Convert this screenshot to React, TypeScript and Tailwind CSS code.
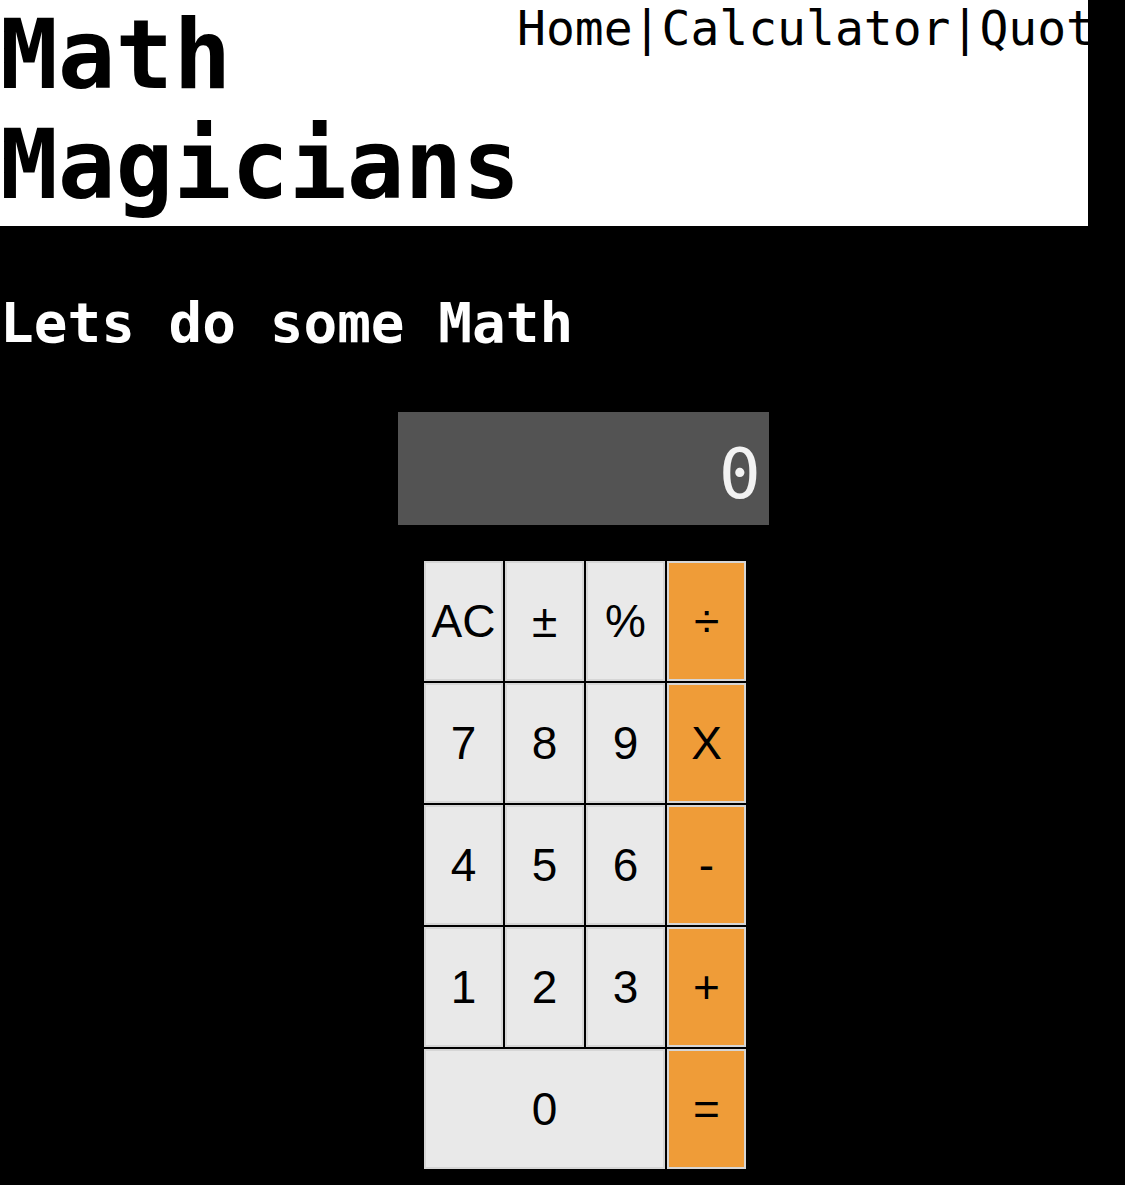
import { useState } from 'react'

const keys: { label: string; orange?: boolean; wide?: boolean }[] = [
  { label: 'AC' },
  { label: '±' },
  { label: '%' },
  { label: '÷', orange: true },
  { label: '7' },
  { label: '8' },
  { label: '9' },
  { label: 'X', orange: true },
  { label: '4' },
  { label: '5' },
  { label: '6' },
  { label: '-', orange: true },
  { label: '1' },
  { label: '2' },
  { label: '3' },
  { label: '+', orange: true },
  { label: '0', wide: true },
  { label: '=', orange: true },
]

export default function App() {
  const [display] = useState('0')

  return (
    <div className="min-h-[1185px] bg-black" style={{ fontFamily: '"DejaVu Sans Mono", monospace' }}>
      {/* Header */}
      <header className="flex h-[226px] w-[1088px] overflow-hidden bg-white text-black">
        <h1 className="w-[517px] shrink-0 text-[96px] font-bold leading-[110px]">Math Magicians</h1>
        <nav className="flex whitespace-nowrap text-[48px] leading-[56px]">
          <a href="#">Home</a>
          <span>|</span>
          <a href="#">Calculator</a>
          <span>|</span>
          <a href="#">Quote</a>
        </nav>
      </header>

      <h2 className="mt-[64px] text-[56px] font-bold leading-[65px] text-white">Lets do some Math</h2>

      {/* Calculator */}
      <div className="ml-[398px] mt-[57px] w-[371px]">
        <div className="h-[113px] bg-[#535353] pr-[8px] pt-[22px] text-right text-[70px] leading-[81px] text-[#f2f2f2]">
          {display}
        </div>

        <div
          className="ml-[26px] mt-[36px] grid w-[322px] grid-cols-4 gap-[2px] bg-black"
          style={{ fontFamily: '"Liberation Sans", Arial, sans-serif' }}
        >
          {keys.map((k) => (
            <button
              key={k.label}
              className={`h-[120px] border-2 border-[#d6d6d6] text-[46px] text-black ${
                k.orange ? 'bg-[#ef9c38]' : 'bg-[#e9e9e9]'
              } ${k.wide ? 'col-span-3' : ''}`}
            >
              {k.label}
            </button>
          ))}
        </div>
      </div>
    </div>
  )
}
